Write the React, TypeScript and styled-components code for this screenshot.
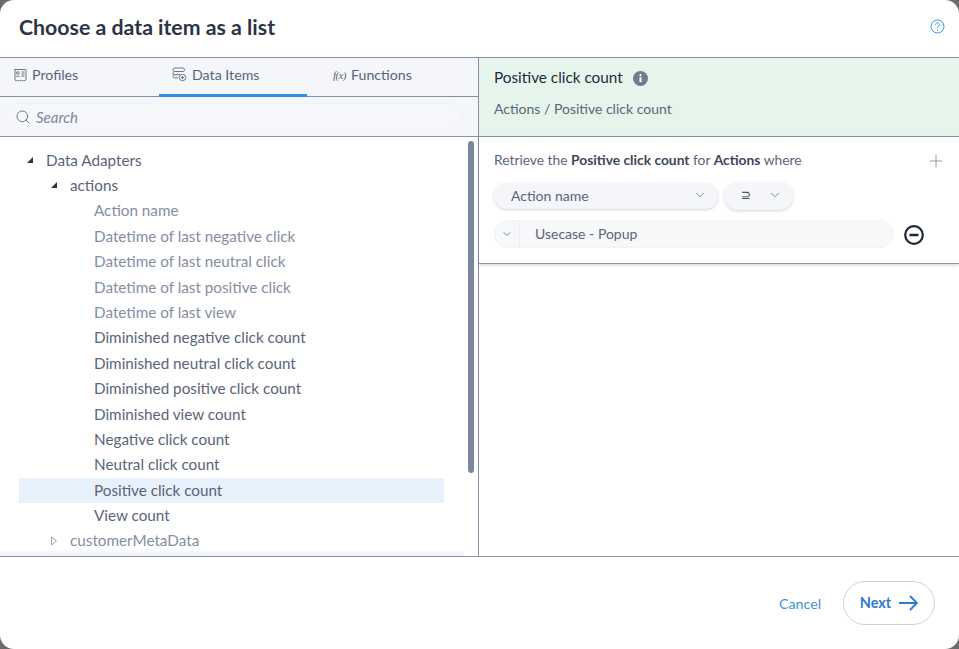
import React from "react";
import styled, { createGlobalStyle } from "styled-components";
import { ChevronDown, Plus, Search as SearchIcon } from "lucide-react";

const GlobalStyle = createGlobalStyle`
  html, body {
    margin: 0;
    padding: 0;
    height: 100%;
    background: #6b6b6b;
    font-family: "Lato", "Noto Sans", sans-serif;
    overflow: hidden;
  }
`;

const Dialog = styled.div`
  width: 959px;
  height: 649px;
  background: #fff;
  border-radius: 14px;
  display: flex;
  flex-direction: column;
  overflow: hidden;
`;

const Header = styled.header`
  height: 57px;
  flex: none;
  display: flex;
  align-items: center;
  justify-content: space-between;
  padding: 0 14px 4px 19px;
  box-sizing: border-box;
`;

const Title = styled.h1`
  margin: 0;
  font-size: 21.3px;
  font-weight: 700;
  color: #2a3446;
`;

const Body = styled.div`
  height: 500px;
  flex: none;
  display: flex;
  border-top: 1px solid #8490a6;
  border-bottom: 1px solid #8490a6;
  box-sizing: border-box;
`;

const LeftPane = styled.section`
  width: 479px;
  flex: none;
  box-sizing: border-box;
  border-right: 1px solid #8490a6;
  display: flex;
  flex-direction: column;
`;

const Tabs = styled.nav`
  height: 39px;
  flex: none;
  display: grid;
  grid-template-columns: 159px 148px 1fr;
  background: #f4f6f9;
  border-bottom: 1px solid #8490a6;
  box-sizing: border-box;
`;

const Tab = styled.div<{ $active?: boolean; $pad: number }>`
  display: flex;
  align-items: center;
  gap: 5px;
  padding: 0 0 3px ${(p) => p.$pad}px;
  margin-bottom: -1px;
  font-size: 14.2px;
  color: #5a6478;
  border-bottom: 3px solid ${(p) => (p.$active ? "#2f8fe8" : "transparent")};
`;

const SearchBar = styled.div`
  height: 40px;
  flex: none;
  background: #f4f6f9;
  border-bottom: 1px solid #8490a6;
  box-sizing: border-box;
  padding: 6px 16px 6px 5px;
`;

const SearchField = styled.div`
  height: 28px;
  border-radius: 14px;
  background: #f5f7fa;
  border: 1px solid #f0f2f6;
  box-sizing: border-box;
  display: flex;
  align-items: center;
  gap: 5px;
  padding: 0 0 1px 9px;
  font-size: 15px;
  font-style: italic;
  color: #7d879b;
`;

const TreeArea = styled.div`
  position: relative;
  flex: 1;
  min-height: 0;
  overflow: hidden;
  padding: 10.6px 34px 0 19px;
`;

const Row = styled.div<{ $depth: number; $muted?: boolean; $selected?: boolean }>`
  position: relative;
  height: 25.4px;
  line-height: 25.4px;
  font-size: 15.25px;
  padding-left: ${(p) => [27, 51, 75][p.$depth]}px;
  color: ${(p) => (p.$muted ? "#848ea1" : "#5a6478")};
  background: ${(p) => (p.$selected ? "#e6f1fb" : "transparent")};
`;

const Caret = styled.svg`
  position: absolute;
  top: 8px;
  left: ${(p) => p.x}px;
`;

const Scrollbar = styled.div`
  position: absolute;
  top: 4px;
  left: 468px;
  width: 6px;
  height: 332px;
  border-radius: 3px;
  background: #7d879b;
`;

const Fade = styled.div`
  position: absolute;
  left: 0;
  bottom: 0;
  width: 464px;
  height: 8px;
  background: linear-gradient(rgba(244, 246, 249, 0), #eef0f4);
`;

const RightPane = styled.section`
  flex: 1;
  display: flex;
  flex-direction: column;
`;

const Summary = styled.div`
  height: 79px;
  flex: none;
  background: #e6f5ec;
  border-bottom: 1px solid #8490a6;
  box-sizing: border-box;
  padding: 9px 15px;
`;

const SummaryTitle = styled.div`
  display: flex;
  align-items: center;
  gap: 10px;
  font-size: 15.3px;
  font-weight: 400;
  color: #222b3d;
  height: 20px;
  svg {
    margin-top: 3px;
  }
`;

const SummaryPath = styled.div`
  margin-top: 13px;
  font-size: 14px;
  color: #5a6478;
`;

const Criteria = styled.div`
  height: 127px;
  flex: none;
  box-sizing: border-box;
  padding: 14px 13px 0 15px;
  border-bottom: 1px solid #8490a6;
  box-shadow: 0 1px 3px rgba(60, 70, 90, 0.25);
`;

const Sentence = styled.div`
  display: flex;
  justify-content: space-between;
  align-items: center;
  height: 18px;
  font-size: 13.8px;
  color: #5a6478;
  span {
    margin-top: -2px;
  }
  b {
    color: #3d4658;
    font-weight: 700;
  }
  svg {
    margin-top: 1px;
  }
`;

const Selects = styled.div`
  display: flex;
  align-items: center;
  gap: 6px;
  margin-top: 13px;
`;

const Select = styled.div<{ $width: number; $height: number }>`
  width: ${(p) => p.$width}px;
  height: ${(p) => p.$height}px;
  border-radius: 14px;
  background: #f4f6f9;
  box-shadow: 0 1px 3px rgba(60, 70, 90, 0.22);
  box-sizing: border-box;
  display: flex;
  align-items: center;
  justify-content: space-between;
  padding: 0 11px 2px 17px;
  font-size: 14px;
  color: #5a6478;
`;

const Superset = styled.span`
  font-family: "DejaVu Sans", sans-serif;
  font-size: 12px;
  color: #2a3446;
`;

const ValueRow = styled.div`
  display: flex;
  align-items: center;
  gap: 10px;
  margin-top: 10px;
  svg.remove {
    margin-top: 2px;
  }
`;

const ValueField = styled.div`
  width: 400px;
  height: 28px;
  border-radius: 14px;
  background: #f6f8fa;
  border: 1px solid #f1f3f6;
  box-sizing: border-box;
  display: flex;
  align-items: center;
  padding-bottom: 2px;
  font-size: 14px;
  color: #5a6478;
`;

const ValueToggle = styled.div`
  width: 24px;
  height: 28px;
  margin-bottom: -2px;
  flex: none;
  display: flex;
  align-items: center;
  justify-content: center;
  border-right: 1px solid #eceff3;
  margin-right: 15px;
`;

const Footer = styled.footer`
  flex: 1;
  display: flex;
  align-items: center;
  justify-content: flex-end;
  gap: 22px;
  padding: 0 24px 0 0;
`;

const CancelLink = styled.span`
  font-size: 14.2px;
  color: #3d8fe0;
`;

const NextButton = styled.div`
  width: 92px;
  height: 44px;
  box-sizing: border-box;
  border: 1px solid #ccd2dc;
  border-radius: 22px;
  display: flex;
  align-items: center;
  justify-content: center;
  gap: 8px;
  padding: 0 0 2px 0;
  font-size: 14.5px;
  font-weight: 700;
  color: #2f78d0;
  svg {
    margin-top: 2px;
  }
`;

const HelpIcon = () => (
  <svg width="15" height="15" viewBox="0 0 15 15" fill="none">
    <circle cx="7.5" cy="7.5" r="6.5" stroke="#3d96ee" />
    <path d="M5.6 5.8a1.9 1.9 0 1 1 2.9 1.6c-.7.4-1 .8-1 1.5" stroke="#3d96ee" />
    <circle cx="7.5" cy="10.8" r=".7" fill="#3d96ee" />
  </svg>
);

const ProfileIcon = () => (
  <svg width="14" height="14" viewBox="0 0 14 14" fill="none" stroke="#5d6678" strokeWidth=".9">
    <path d="M1.5 1.500h11a.5.5 0 0 1 .5.5V12c-1 1-1.500 1-2.200 0-.7 1-1.500 1-2.200 0-.7 1-1.500 1-2.200 0-.7 1-1.500 1-2.200 0-.7 1-1.500 1-2.200 0V2a.5.5 0 0 1 .500-.5z" />
    <circle cx="4.800" cy="5" r="1.300" />
    <path d="M2.800 9.200c.3-1.500 3.700-1.500 4 0M8.500 4h3M8.500 6h3M8.500 8h3" />
  </svg>
);

const DataItemsIcon = () => (
  <svg width="15" height="15" viewBox="0 0 15 15" fill="none" stroke="#5d6678" strokeWidth=".9">
    <rect x="1" y="1" width="11.500" height="3.500" rx="1.700" />
    <path d="M2.500 4.500C1.500 4.800 1 5.300 1 6.200s.5 1.500 1.700 1.500H8M2.500 7.700C1.500 8 1 8.500 1 9.400s.5 1.500 1.700 1.500H6" />
    <circle cx="10.500" cy="10.500" r="3.200" />
    <path d="M10.500 9v3M9 10.500h3" />
  </svg>
);

const FunctionGlyph = styled.span`
  font-family: "Liberation Serif", serif;
  font-style: italic;
  font-size: 11px;
  width: 13px;
  color: #5d6678;
  letter-spacing: -0.6px;
  white-space: nowrap;
`;

const CaretDown = ({ x }: { x: number }) => (
  <Caret x={x} width="8" height="8" viewBox="0 0 8 8">
    <path d="M7 1v6H1z" fill="#2c3342" />
  </Caret>
);

const CaretRight = ({ x }: { x: number }) => (
  <Caret x={x} width="8" height="10" viewBox="0 0 8 10">
    <path d="M1.500 1l5 4-5 4z" fill="none" stroke="#9aa3b3" />
  </Caret>
);

const InfoIcon = () => (
  <svg width="15" height="15" viewBox="0 0 15 15">
    <circle cx="7.500" cy="7.500" r="7.500" fill="#727c8f" />
    <circle cx="7.500" cy="4.200" r="1.100" fill="#fff" />
    <rect x="6.500" y="6.200" width="2" height="5" fill="#fff" />
  </svg>
);

const RemoveIcon = () => (
  <svg className="remove" width="20" height="20" viewBox="0 0 20 20" fill="none" stroke="#1d2638" strokeWidth="2.200">
    <circle cx="10" cy="10" r="8.800" />
    <path d="M5.500 10h9" strokeWidth="2.400" />
  </svg>
);

const NextArrow = () => (
  <svg width="19" height="16" viewBox="0 0 19 16" fill="none" stroke="#2f78d0" strokeWidth="1.800">
    <path d="M0 8h18M11 1l7 7-7 7" />
  </svg>
);

const greyed = [
  "Action name",
  "Datetime of last negative click",
  "Datetime of last neutral click",
  "Datetime of last positive click",
  "Datetime of last view",
];

const active = [
  "Diminished negative click count",
  "Diminished neutral click count",
  "Diminished positive click count",
  "Diminished view count",
  "Negative click count",
  "Neutral click count",
];

export default function App() {
  return (
    <>
      <GlobalStyle />
      <Dialog>
        <Header>
          <Title>Choose a data item as a list</Title>
          <HelpIcon />
        </Header>
        <Body>
          <LeftPane>
            <Tabs>
              <Tab $pad={13}>
                <ProfileIcon />
                Profiles
              </Tab>
              <Tab $active $pad={13}>
                <DataItemsIcon />
                Data Items
              </Tab>
              <Tab $pad={26}>
                <FunctionGlyph>f(x)</FunctionGlyph>
                Functions
              </Tab>
            </Tabs>
            <SearchBar>
              <SearchField>
                <SearchIcon size={16} strokeWidth={1.3} color="#5d6678" />
                Search
              </SearchField>
            </SearchBar>
            <TreeArea>
              <Row $depth={0}>
                <CaretDown x={7} />
                Data Adapters
              </Row>
              <Row $depth={1}>
                <CaretDown x={31} />
                actions
              </Row>
              {greyed.map((name) => (
                <Row key={name} $depth={2} $muted>
                  {name}
                </Row>
              ))}
              {active.map((name) => (
                <Row key={name} $depth={2}>
                  {name}
                </Row>
              ))}
              <Row $depth={2} $selected>
                Positive click count
              </Row>
              <Row $depth={2}>View count</Row>
              <Row $depth={1} $muted>
                <CaretRight x={31} />
                customerMetaData
              </Row>
              <Scrollbar />
              <Fade />
            </TreeArea>
          </LeftPane>
          <RightPane>
            <Summary>
              <SummaryTitle>
                Positive click count
                <InfoIcon />
              </SummaryTitle>
              <SummaryPath>Actions / Positive click count</SummaryPath>
            </Summary>
            <Criteria>
              <Sentence>
                <span>
                  Retrieve the <b>Positive click count</b> for <b>Actions</b> where
                </span>
                <Plus size={20} strokeWidth={1.1} color="#8a93a3" />
              </Sentence>
              <Selects>
                <Select $width={224} $height={26}>
                  Action name
                  <ChevronDown size={14} strokeWidth={1.4} color="#5f7290" />
                </Select>
                <Select $width={69} $height={28}>
                  <Superset>⊇</Superset>
                  <ChevronDown size={14} strokeWidth={1.4} color="#5f7290" />
                </Select>
              </Selects>
              <ValueRow>
                <ValueField>
                  <ValueToggle>
                    <ChevronDown size={12} strokeWidth={1.6} color="#5f6b80" />
                  </ValueToggle>
                  Usecase - Popup
                </ValueField>
                <RemoveIcon />
              </ValueRow>
            </Criteria>
          </RightPane>
        </Body>
        <Footer>
          <CancelLink>Cancel</CancelLink>
          <NextButton>
            Next
            <NextArrow />
          </NextButton>
        </Footer>
      </Dialog>
    </>
  );
}
